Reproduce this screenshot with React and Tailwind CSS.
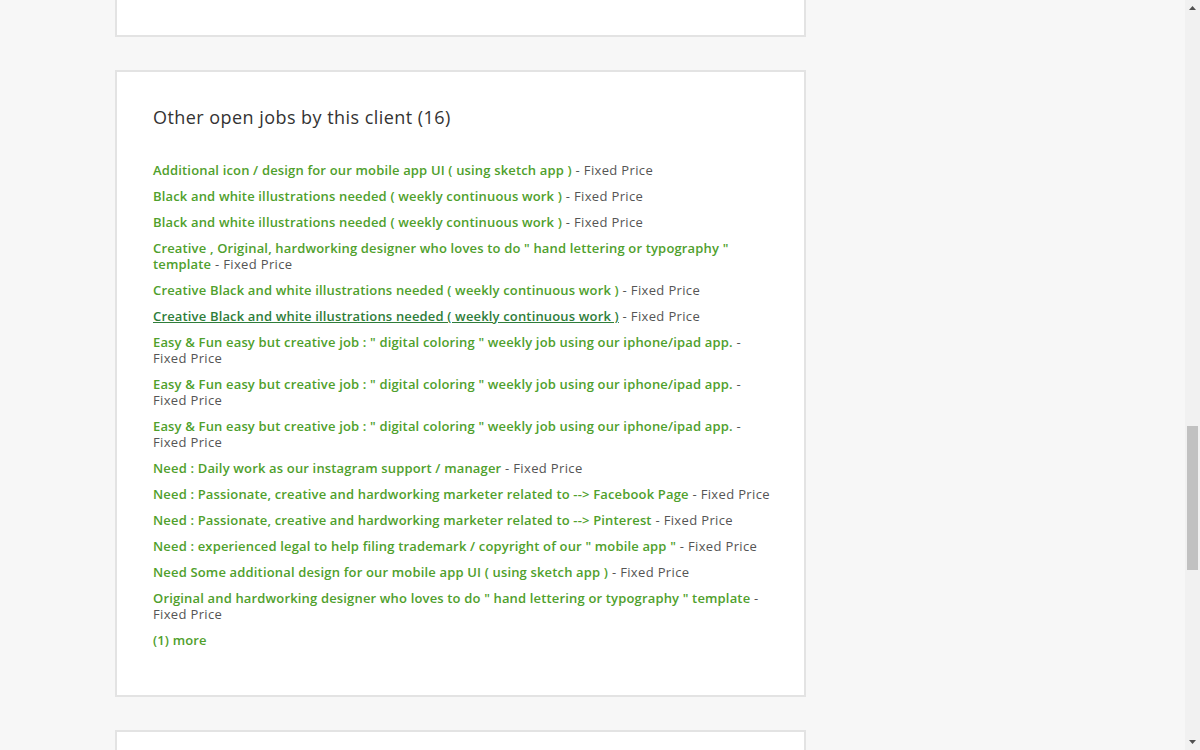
const jobs = [
  { title: 'Additional icon / design for our mobile app UI ( using sketch app )' },
  { title: 'Black and white illustrations needed ( weekly continuous work )' },
  { title: 'Black and white illustrations needed ( weekly continuous work )' },
  { title: 'Creative , Original, hardworking designer who loves to do " hand lettering or typography " template' },
  { title: 'Creative Black and white illustrations needed ( weekly continuous work )' },
  { title: 'Creative Black and white illustrations needed ( weekly continuous work )', hover: true },
  { title: 'Easy & Fun easy but creative job : " digital coloring " weekly job using our iphone/ipad app.' },
  { title: 'Easy & Fun easy but creative job : " digital coloring " weekly job using our iphone/ipad app.' },
  { title: 'Easy & Fun easy but creative job : " digital coloring " weekly job using our iphone/ipad app.' },
  { title: 'Need : Daily work as our instagram support / manager' },
  { title: 'Need : Passionate, creative and hardworking marketer related to --> Facebook Page' },
  { title: 'Need : Passionate, creative and hardworking marketer related to --> Pinterest' },
  { title: 'Need : experienced legal to help filing trademark / copyright of our " mobile app "' },
  { title: 'Need Some additional design for our mobile app UI ( using sketch app )' },
  { title: 'Original and hardworking designer who loves to do " hand lettering or typography " template' },
]

const Scrollbar = () => (
  <div className="w-[15px] shrink-0 bg-[#f1f1f1] flex flex-col items-center">
    <div className="h-[16px] flex items-center justify-center">
      <svg width="7" height="4" viewBox="0 0 7 4"><path d="M3.5 0 L7 4 L0 4 Z" fill="#505050" /></svg>
    </div>
    <div className="h-[410px]" />
    <div className="w-[11px] h-[144px] bg-[#c1c1c1]" />
    <div className="flex-1" />
    <div className="h-[16px] flex items-center justify-center">
      <svg width="7" height="4" viewBox="0 0 7 4"><path d="M0 0 L7 0 L3.5 4 Z" fill="#505050" /></svg>
    </div>
  </div>
)

export default function App() {
  return (
    <div className="h-[750px] overflow-hidden flex bg-[#f7f7f7]" style={{ fontFamily: '"Open Sans", "Liberation Sans", sans-serif' }}>
      <div className="flex-1 min-w-0">
        <div className="ml-[115px] w-[691px] flex flex-col gap-[33px]">
          <div className="h-[37px] bg-white border-2 border-t-0 border-[#e3e3e3]" />

          <div className="h-[627px] bg-white border-2 border-[#e3e3e3] pl-[36px] pr-[30px] pt-[31px]">
            <h2 className="text-[18px] leading-[28px] text-[#333] tracking-[0.45px]">Other open jobs by this client (16)</h2>
            <ul className="mt-[31px] flex flex-col gap-[10px] text-[13px] leading-[16px] tracking-[0.35px]">
              {jobs.map((j, i) => (
                <li key={i} className="text-[#555]">
                  <a className={`font-semibold tracking-[0.16px] ${j.hover ? 'underline text-[#2f7d3a]' : 'text-[#4fa02c]'}`}>{j.title}</a>
                  {' '}- Fixed Price
                </li>
              ))}
              <li><a className="font-semibold tracking-[0.16px] text-[#4fa02c]">(1) more</a></li>
            </ul>
          </div>

          <div className="h-[40px] bg-white border-2 border-b-0 border-[#e3e3e3]" />
        </div>
      </div>
      <Scrollbar />
    </div>
  )
}
